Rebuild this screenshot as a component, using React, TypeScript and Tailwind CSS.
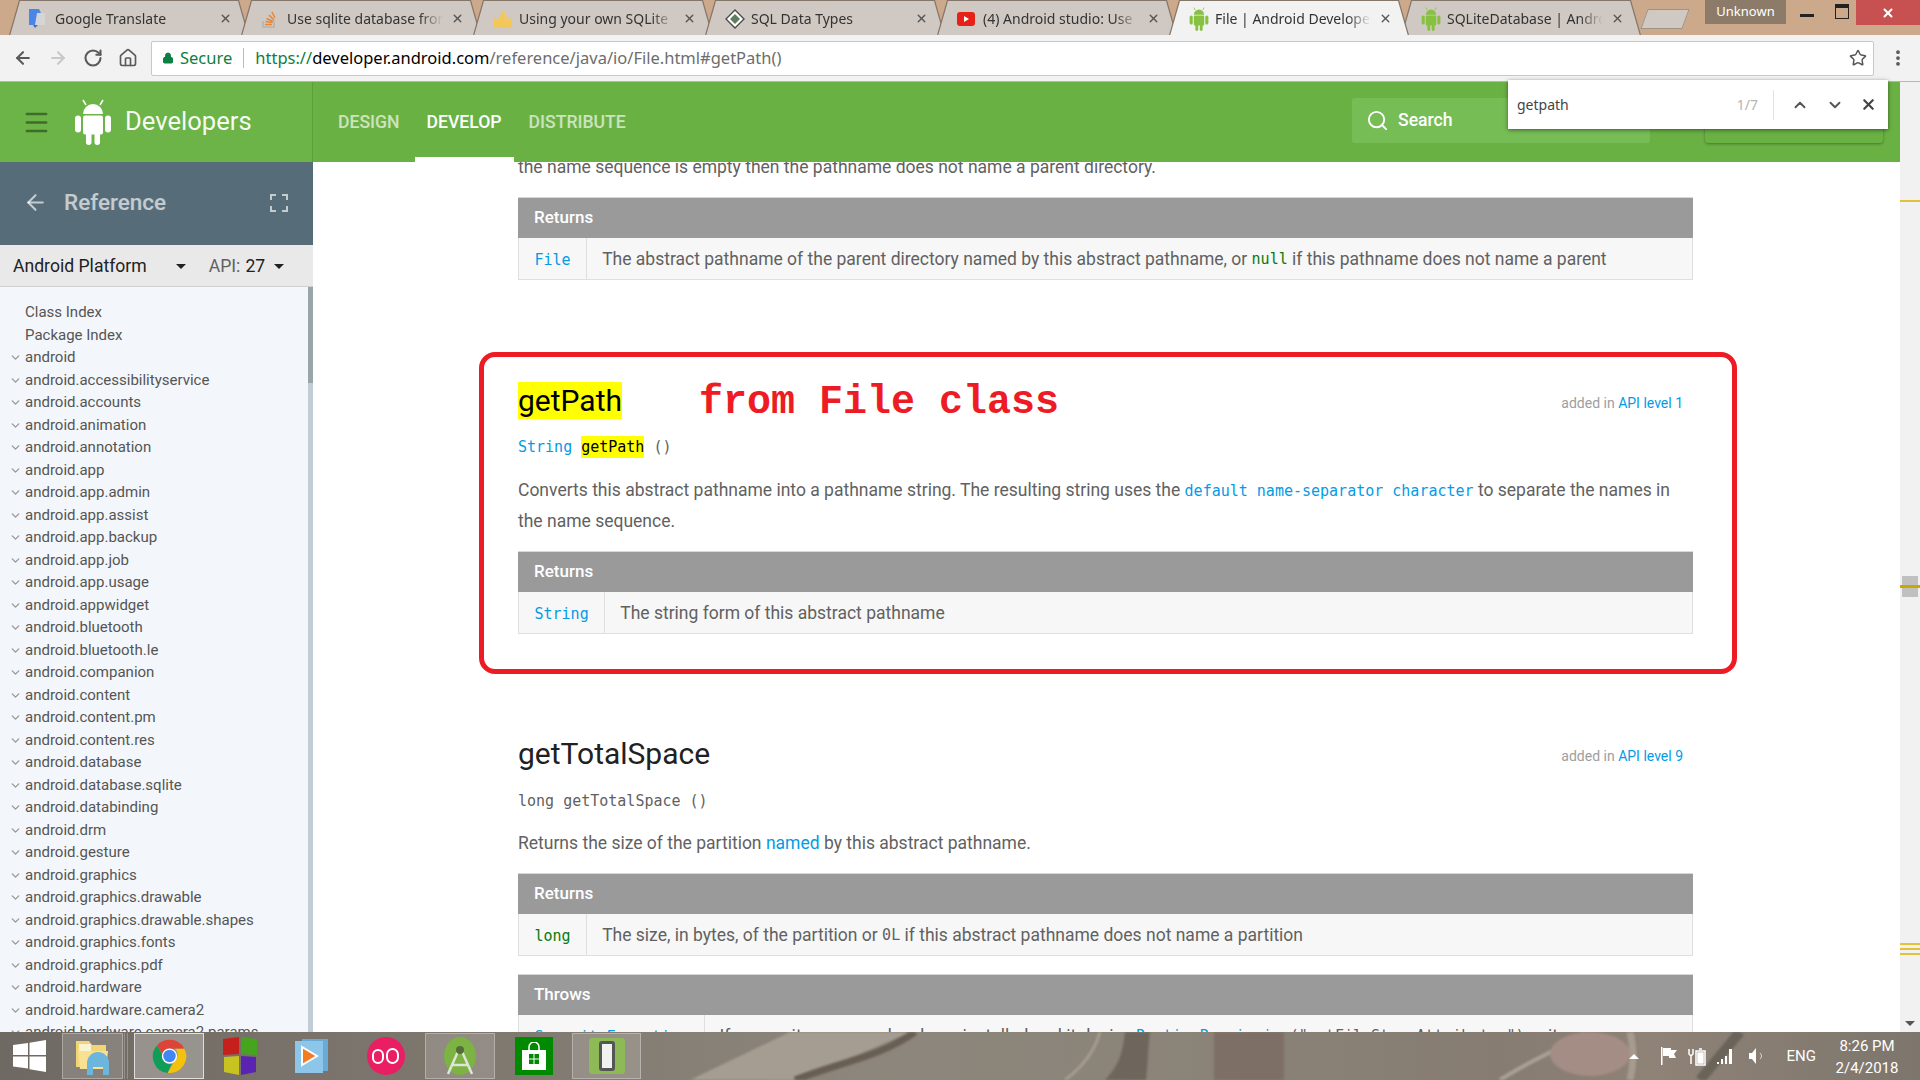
import React from "react";
import { ArrowLeft, ArrowRight, ChevronDown, ChevronUp, Home, Lock, Menu, MoreVertical, RotateCw, Search, Star, X } from "lucide-react";

const packages = [
  "android",
  "android.accessibilityservice",
  "android.accounts",
  "android.animation",
  "android.annotation",
  "android.app",
  "android.app.admin",
  "android.app.assist",
  "android.app.backup",
  "android.app.job",
  "android.app.usage",
  "android.appwidget",
  "android.bluetooth",
  "android.bluetooth.le",
  "android.companion",
  "android.content",
  "android.content.pm",
  "android.content.res",
  "android.database",
  "android.database.sqlite",
  "android.databinding",
  "android.drm",
  "android.gesture",
  "android.graphics",
  "android.graphics.drawable",
  "android.graphics.drawable.shapes",
  "android.graphics.fonts",
  "android.graphics.pdf",
  "android.hardware",
  "android.hardware.camera2",
  "android.hardware.camera2.params",
];

const AndroidBot = ({ className, color }: { className: string; color: string }) => (
  <svg viewBox="0 0 38 46" className={className} fill={color}>
    <path d="M9 15a10 10 0 0 1 20 0z" />
    <path d="M12 6 9 1M26 6l3-5" stroke={color} strokeWidth="1.5" />
    <rect x="9" y="16.5" width="20" height="19" rx="2" />
    <rect x="1" y="16.5" width="6" height="17" rx="3" />
    <rect x="31" y="16.5" width="6" height="17" rx="3" />
    <rect x="12" y="33" width="5.5" height="13" rx="2.7" />
    <rect x="20.5" y="33" width="5.5" height="13" rx="2.7" />
  </svg>
);

const tabs = [
  {
    title: "Google Translate",
    icon: (
      <svg viewBox="0 0 16 20" className="w-[16px] h-[20px]">
        <path d="M0 0h10l2 4v12H0z" fill="#4a86e8" />
        <path d="M8 4h8v12H6z" fill="#d5d5d5" />
        <path d="M4 16h5l-3 3z" fill="#3b6fc4" />
      </svg>
    ),
  },
  {
    title: "Use sqlite database from",
    icon: (
      <svg viewBox="0 0 16 20" className="w-[16px] h-[20px]" fill="none">
        <path d="M2 12v6h11v-6" stroke="#b9b3ac" strokeWidth="1.6" />
        <path d="M4 15.5h7M4.5 12.5l7 1M5.5 9.5l6.5 3M8 6l5 5M11 3l3 6" stroke="#e8873a" strokeWidth="1.6" />
      </svg>
    ),
  },
  {
    title: "Using your own SQLite",
    icon: (
      <svg viewBox="0 0 20 20" className="w-[20px] h-[20px]">
        <path d="M1 8l4 3 5-10 5 10 4-3v11H1z" fill="#f4c75a" />
      </svg>
    ),
  },
  {
    title: "SQL Data Types",
    icon: (
      <svg viewBox="0 0 20 20" className="w-[20px] h-[20px]">
        <path d="M10 1l9 9-9 9-9-9z" fill="#fff" stroke="#4b4b4b" strokeWidth="1.4" />
        <path d="M10 5l5 5-5 5-5-5z" fill="#5d7f5f" />
      </svg>
    ),
  },
  {
    title: "(4) Android studio: Use",
    icon: (
      <svg viewBox="0 0 18 14" className="w-[18px] h-[14px]">
        <rect width="18" height="14" rx="3" fill="#e62117" />
        <path d="M7 4l5 3-5 3z" fill="#fff" />
      </svg>
    ),
  },
  { title: "File | Android Develope", icon: <AndroidBot className="w-[20px] h-[24px]" color="#86c240" />, active: true },
  { title: "SQLiteDatabase | Andro", icon: <AndroidBot className="w-[20px] h-[24px]" color="#86c240" /> },
];

const Tab = ({ title, icon, active }: { title: string; icon: React.ReactNode; active?: boolean }) => (
  <div className={`w-[240px] h-[35px] -mr-[8px] shrink-0 bg-[#85766a] [clip-path:polygon(0_100%,10px_0,calc(100%-10px)_0,100%_100%)] ${active ? "relative z-10" : ""}`}>
    <div className={`h-[35px] mt-px flex items-center pl-[20px] pr-[17px] [clip-path:polygon(1px_100%,11px_0,calc(100%-11px)_0,calc(100%-1px)_100%)] ${active ? "bg-[#f2f2f2]" : "bg-[#d0c8c2]"}`}>
      <div className="w-[26px] shrink-0 flex items-center justify-start">{icon}</div>
      <div className="flex-1 min-w-0 overflow-hidden whitespace-nowrap text-[14px] text-[#333] [mask-image:linear-gradient(to_right,black_85%,transparent)]">{title}</div>
      <X className="w-[13px] h-[13px] ml-[8px] shrink-0 text-[#555]" strokeWidth={2.5} />
    </div>
  </div>
);

const Code = ({ children, className = "" }: { children: React.ReactNode; className?: string }) => (
  <code className={`font-['DejaVu_Sans_Mono',monospace] text-[15px] ${className}`}>{children}</code>
);

const DocTable = ({ title, type, children, typeColor = "text-[#039be5]" }: { title: string; type: string; children: React.ReactNode; typeColor?: string }) => (
  <div>
    <div className="h-[41px] flex items-center px-[16px] bg-[#9a9a9a] text-white font-medium text-[17px] border-t border-[#d8d8d8]">{title}</div>
    <div className="h-[42px] flex bg-[#f7f7f7] border-x border-b border-[#dfdfdf] overflow-hidden">
      <div className="px-[15.5px] pt-[3px] flex items-center border-r border-[#dfdfdf]">
        <Code className={typeColor}>{type}</Code>
      </div>
      <div className="px-[15px] pt-[1px] flex items-center whitespace-nowrap">{children}</div>
    </div>
  </div>
);

const Added = ({ level }: { level: number }) => (
  <div className="text-[14px] mt-[7px] text-[#9e9e9e] mr-[10px]">
    added in <span className="text-[#039be5]">API level {level}</span>
  </div>
);

const Taskbar = () => (
  <div className="h-[48px] shrink-0 relative flex items-center overflow-hidden bg-[linear-gradient(90deg,#6f6963_0%,#7f786f_25%,#8d867c_45%,#8b8479_60%,#867c72_78%,#8f8277_86%,#7d766c_100%)]">
    <svg className="absolute inset-0 w-full h-full blur-[1px]" viewBox="0 0 1920 48" preserveAspectRatio="none" fill="none">
      <path d="M690 48 790 0h120l-110 48z" fill="#a59d92" />
      <path d="M795 48C840 30 880 25 915 0" stroke="#695e54" strokeWidth="7" />
      <path d="M1065 48c20-15 30-30 35-48" stroke="#a59d92" strokeWidth="3" />
      <path d="M1105 48c15-15 18-30 20-48h25c-2 15-2 30-4 48z" fill="#6e665c" />
      <path d="M1214 48V0h70v48z" fill="#7d6f66" />
      <path d="M1500 48c30-20 60-30 85-48" stroke="#aaa296" strokeWidth="4" />
      <ellipse cx="1590" cy="22" rx="40" ry="22" fill="#a48d84" />
      <path d="M1630 48c4-20 4-30 0-48" stroke="#a59b8e" strokeWidth="7" />
      <path d="M1700 48l40-48" stroke="#6a6359" strokeWidth="10" />
    </svg>
    <div className="relative flex items-center h-full">
      <div className="w-[62px] flex justify-center pr-[3px]">
        <svg viewBox="0 0 33 32" className="w-[33px] h-[32px]" fill="#fff">
          <path d="M0 5l15-2v12H0zM16.500 2.800 33 0v15H16.500zM0 16.500h15v12L0 26.500zM16.500 16.500H33V32l-16.500-2.800z" />
        </svg>
      </div>
      <div className="w-[61px] h-[46px] flex items-center justify-center bg-white/15 border border-white/30">
        <svg viewBox="0 0 38 38" className="w-[38px] h-[38px]">
          <path d="M2 4h13l3 4h14v22H2z" fill="#f2d675" />
          <path d="M5 7h12v7H5z" fill="#fbf3cf" />
          <path d="M4 14h30l-2 18H6z" fill="#f8e193" />
          <path d="M13 26a9 9 0 0 1 22 0v12h-6v-8h-10v8h-6z" fill="#6cb5dd" />
        </svg>
      </div>
      <div className="w-[4px] h-[46px] ml-[1px] border-x border-white/25" />
      <div className="w-[70px] h-[46px] ml-[6px] flex items-center justify-center bg-white/25 border border-white/70">
        <svg viewBox="0 0 40 40" className="w-[37px] h-[37px]">
          <path d="M20 2a18 18 0 0 1 16 9.500H20a8.500 8.500 0 0 0-8 5.500L6.500 8A18 18 0 0 1 20 2z" fill="#db4437" />
          <path d="M6.500 8 14 21a8 8 0 0 0 9 5l-5 11.800A18 18 0 0 1 6.500 8z" fill="#0f9d58" />
          <path d="M36 11.500A18 18 0 0 1 18 37.800L26 24a8 8 0 0 0 0-12.500z" fill="#f4c20d" />
          <circle cx="20" cy="19.500" r="7.500" fill="#4285f4" stroke="#fff" strokeWidth="1.500" />
        </svg>
      </div>
      <div className="w-[72px] flex justify-center">
        <svg viewBox="0 0 38 40" className="w-[38px] h-[40px]">
          <path d="M2 3l16-2v17l-16 1z" fill="#c6201c" />
          <path d="M20 1l16 2v16l-16-1z" fill="#46a51f" />
          <path d="M3 21l15-1v19l-15-3z" fill="#c9c322" />
          <path d="M20 20l15 1v15l-15 3z" fill="#5b24b0" />
        </svg>
      </div>
      <div className="w-[70px] flex justify-center">
        <svg viewBox="0 0 34 36" className="w-[34px] h-[36px]">
          <path d="M8 1h26v32H8z" fill="#68abd6" />
          <path d="M1 3h28v32H1z" fill="#8dc6e8" />
          <path d="M8 9l15 9-15 9z" fill="#f47b20" stroke="#fff" strokeWidth="2" />
        </svg>
      </div>
      <div className="w-[79px] flex justify-center">
        <div className="w-[38px] h-[38px] rounded-full bg-[#e91e63] flex items-center justify-center gap-[2px]">
          <div className="w-[12px] h-[15px] rounded-full border-[2px] border-white" />
          <div className="w-[13px] h-[16px] rounded-full border-[2px] border-white" />
        </div>
      </div>
      <div className="w-[70px] h-[46px] flex items-center justify-center bg-white/15 border border-white/30">
        <svg viewBox="0 0 40 40" className="w-[40px] h-[40px]">
          <ellipse cx="20" cy="20" rx="16" ry="19" fill="#7cb342" />
          <path d="M20 11 8 38M20 11l12 27M11 29h18" stroke="#dfe3d8" strokeWidth="2.500" fill="none" />
          <circle cx="20" cy="14" r="4" fill="#546e3a" />
        </svg>
      </div>
      <div className="w-[77px] flex justify-center">
        <div className="w-[38px] h-[38px] bg-[#008a00] flex items-center justify-center">
          <svg viewBox="0 0 24 28" className="w-[24px] h-[28px]" fill="#fff">
            <path d="M0 8h24v20H0z" />
            <path d="M7 9V5a5 5 0 0 1 10 0v4" fill="none" stroke="#fff" strokeWidth="1.500" />
            <path d="M7 12h4.500v4.500H7zM12.500 12H17v4.500h-4.500zM7 17.500h4.500V22H7zM12.500 17.500H17V22h-4.500z" fill="#008a00" />
          </svg>
        </div>
      </div>
      <div className="w-[69px] h-[46px] flex items-center justify-center bg-white/15 border border-white/30">
        <div className="w-[36px] h-[36px] bg-[#8bc34a]/80 rounded-[3px] flex items-center justify-center">
          <div className="w-[16px] h-[30px] rounded-[3px] bg-[#f0f0f0] border-[3px] border-[#555]" />
        </div>
      </div>
    </div>
    <div className="relative ml-auto h-full flex items-center text-white">
      <div className="w-0 h-0 border-x-[5px] border-x-transparent border-b-[5px] border-b-white mr-[20px]" />
      <svg viewBox="0 0 20 20" className="w-[20px] h-[20px] mr-[9px]" fill="#fff"><path d="M2 1h1.500v18H2zM4 2h8v2h6l-3 4 2 4h-7v-2H4z" /></svg>
      <svg viewBox="0 0 20 20" className="w-[20px] h-[20px] mr-[9px]" fill="none" stroke="#fff" strokeWidth="1.500"><path d="M1 3v5l2 2 2-2V3M3 10v8M8 5h9v14H8z" /><path d="M11 3h3M10 7h5v10h-5z" fill="#fff" /></svg>
      <svg viewBox="0 0 16 16" className="w-[16px] h-[16px] mr-[15px]" fill="#fff"><path d="M0 14h2v2H0zM4 11h2v5H4zM8 8h2v8H8zM12 1h3v15h-3z" /></svg>
      <svg viewBox="0 0 18 18" className="w-[18px] h-[18px] mr-[21px]" fill="#fff"><path d="M1 6h3l4-5v16l-4-5H1z" /><path d="M12 6c2 2 2 4 0 6" fill="none" stroke="#d8d8d8" /></svg>
      <span className="text-[15px] mr-[19px]">ENG</span>
      <div className="w-[64px] mr-[21px] pt-[2px] text-[15px] leading-[22px] text-center whitespace-nowrap">
        <div>8:26 PM</div>
        <div>2/4/2018</div>
      </div>
    </div>
  </div>
);

export default function App() {
  return (
    <div className="w-[1920px] h-[1080px] overflow-hidden flex flex-col bg-white font-['Roboto',sans-serif]">
      {/* chrome tab strip */}
      <div className="h-[35px] shrink-0 bg-[#cba98a] relative flex pl-[9px] font-['Noto_Sans',sans-serif]">
        {tabs.map((t) => (
          <Tab key={t.title} title={t.title} icon={t.icon} active={t.active} />
        ))}
        <div className="w-[42px] h-[20px] ml-[11px] mt-[9px] bg-[#d0c8c2] border border-[#9e9389] -skew-x-[20deg]" />
        <div className="ml-auto flex items-start h-[25px]">
          <div className="w-[81px] h-[24px] bg-[#8c7b68] flex items-center justify-center text-white text-[13px]">Unknown</div>
          <div className="w-[42px] h-[24px] flex items-center justify-center">
            <div className="w-[14px] h-[3px] mt-[6px] bg-[#222]" />
          </div>
          <div className="w-[28px] h-[24px] flex justify-center pt-[4px]">
            <div className="w-[14px] h-[15px] border-[1.5px] border-t-[4px] border-[#222]" />
          </div>
          <div className="w-[64px] h-[25px] bg-[#c75050] flex items-center justify-center">
            <X className="w-[14px] h-[14px] text-white" strokeWidth={3.5} />
          </div>
        </div>
      </div>

      {/* toolbar */}
      <div className="h-[47px] shrink-0 bg-[#f2f2f2] border-b border-[#b5b5b5] flex items-center font-['Noto_Sans',sans-serif]">
        <div className="w-[151px] flex items-center pl-[13px] gap-[15px]">
          <ArrowLeft className="w-[20px] h-[20px] text-[#5a5a5a]" strokeWidth={2.5} />
          <ArrowRight className="w-[20px] h-[20px] text-[#c8c8c8]" strokeWidth={2.5} />
          <RotateCw className="w-[20px] h-[20px] text-[#5a5a5a]" strokeWidth={2.5} />
          <Home className="w-[20px] h-[20px] text-[#5a5a5a]" strokeWidth={2} />
        </div>
        <div className="w-[1723px] h-[35px] bg-white border border-[#c8c8c8] rounded-[2px] flex items-center pl-[10px] pr-[6px]">
          <Lock className="w-[12px] h-[16px] text-[#0b8043] fill-[#0b8043]" />
          <span className="ml-[6px] text-[16.5px] text-[#0b8043]">Secure</span>
          <div className="w-px h-[20px] bg-[#bbb] mx-[11px]" />
          <div className="text-[16.5px] whitespace-nowrap text-[#6d6d6d]">
            <span className="text-[#0b8043]">https://</span>
            <span className="text-black">developer.android.com</span>/reference/java/io/File.html#getPath()
          </div>
          <Star className="ml-auto w-[18px] h-[18px] text-[#555]" strokeWidth={2} />
        </div>
        <MoreVertical className="ml-[14px] w-[20px] h-[20px] text-[#555]" strokeWidth={2.5} />
      </div>

      {/* site header */}
      <div className="h-[80px] shrink-0 flex relative">
        <div className="w-[313px] shrink-0 bg-[#6cb447] border-r border-[#5da03a] flex items-center pl-[22px]">
          <Menu className="w-[29px] h-[29px] text-[#3f6b2b]" />
          <AndroidBot className="w-[38px] h-[46px] ml-[23px]" color="#fff" />
          <span className="ml-[13px] pb-[2px] text-[25.6px] text-white/95">Developers</span>
        </div>
        <div className="flex-1 bg-[#6ab144] flex mr-[20px] pr-[17px]">
          <div className="flex h-full pl-[25px] text-[17.6px] font-medium">
            <div className="flex items-center text-white/65">DESIGN</div>
            <div className="ml-[15px] px-[12px] flex items-center text-white relative">
              DEVELOP
              <div className="absolute left-0 right-0 bottom-0 h-[5px] bg-white" />
            </div>
            <div className="ml-[15px] flex items-center text-white/65">DISTRIBUTE</div>
          </div>
          <div className="ml-auto mt-[16px] w-[298px] h-[45px] bg-[#76bd55] rounded-[3px] flex items-center pl-[14px] text-white">
            <Search className="w-[23px] h-[23px]" />
            <span className="ml-[9px] text-[17.6px] font-medium">Search</span>
          </div>
          <div className="ml-[55px] mt-[16px] w-[178px] h-[45px] bg-[#6ab144] rounded-[3px] shadow-[0_1px_3px_rgba(0,0,0,0.35)]" />
        </div>
        <div className="w-[20px] bg-[#f1f1f1] absolute right-0 top-0 bottom-0" />
        {/* find in page */}
        <div className="absolute left-[1508px] top-[-2px] w-[380px] h-[49px] bg-white shadow-[0_1px_4px_rgba(0,0,0,0.5)] flex items-center pl-[9px] font-['Noto_Sans',sans-serif] z-20">
          <span className="text-[14px] text-[#444]">getpath</span>
          <span className="ml-auto text-[14px] text-[#b5b5b5]">1/7</span>
          <div className="w-px h-[30px] bg-[#e2e2e2] ml-[15px]" />
          <ChevronUp className="w-[18px] h-[18px] ml-[17px] text-[#555]" strokeWidth={2.5} />
          <ChevronDown className="w-[18px] h-[18px] ml-[17px] text-[#555]" strokeWidth={2.5} />
          <X className="w-[17px] h-[17px] ml-[16px] mr-[11px] text-[#444]" strokeWidth={3} />
        </div>
      </div>

      <div className="flex-1 min-h-0 flex">
        {/* left nav */}
        <div className="w-[313px] shrink-0 flex flex-col overflow-hidden">
          <div className="h-[83px] shrink-0 bg-[#566d79] flex items-center pl-[23px] pb-[2px] text-white/65">
            <ArrowLeft className="w-[25px] h-[25px]" />
            <span className="ml-[16px] text-[22.5px] font-medium">Reference</span>
            <svg viewBox="0 0 18 18" className="w-[18px] h-[18px] ml-[104px]" fill="none" stroke="currentColor" strokeWidth="2">
              <path d="M1 6V1h5M12 1h5v5M17 12v5h-5M6 17H1v-5" />
            </svg>
          </div>
          <div className="h-[42px] shrink-0 bg-[#e9e9ea] border-b border-[#cfcfcf] flex items-center pl-[13px] pt-[2px] text-[17.6px] text-[#212121]">
            <span>Android Platform</span>
            <div className="ml-[29px] w-0 h-0 border-x-[5px] border-x-transparent border-t-[5px] border-t-[#212121]" />
            <span className="ml-[23px] text-[#616161]">API:</span>
            <span className="ml-[5px]">27</span>
            <div className="ml-[9px] w-0 h-0 border-x-[5px] border-x-transparent border-t-[5px] border-t-[#212121]" />
          </div>
          <div className="flex-1 min-h-0 flex bg-[#f3f7fb]">
            <div className="flex-1 pt-[14px] pl-[25px] text-[15px] leading-[22.5px] text-[#555] whitespace-nowrap overflow-hidden">
              <div>Class Index</div>
              <div>Package Index</div>
              {packages.map((p) => (
                <div key={p} className="relative">
                  <ChevronDown className="absolute -left-[16px] top-[5px] w-[13px] h-[13px] text-[#999]" strokeWidth={2.5} />
                  {p}
                </div>
              ))}
            </div>
            <div className="w-[5px] bg-[#c1cdd5]">
              <div className="h-[96px] bg-[#9aa5aa]" />
            </div>
          </div>
        </div>

        {/* doc content */}
        <div className="flex-1 min-w-0 relative overflow-hidden pl-[205px] pr-[227px] text-[#616161] text-[17.5px]">
          <div className="-mt-[10px] h-[45px] leading-[30px] whitespace-nowrap">the name sequence is empty then the pathname does not name a parent directory.</div>
          <DocTable title="Returns" type="File">
            The abstract pathname of the parent directory named by this abstract pathname, or&nbsp;<Code className="text-[#0a7a0a]">null</Code>&nbsp;if this pathname does not name a parent
          </DocTable>

          {/* getPath */}
          <div className="mt-[101px] flex items-center justify-between h-[38px]">
            <h2 className="text-[30px] text-black bg-[#ffff00] leading-[37px]">getPath</h2>
            <Added level={1} />
          </div>
          <div className="mt-[18px] h-[20px] flex items-center">
            <Code className="text-[#039be5]">String</Code>
            <Code className="ml-[9px] text-black bg-[#ffff00]">getPath</Code>
            <Code className="ml-[9px]">()</Code>
          </div>
          <p className="mt-[18px] leading-[30px]">
            Converts this abstract pathname into a pathname string. The resulting string uses the <Code className="text-[#039be5] text-[14.6px]">default name-separator character</Code> to separate the names in the name sequence.
          </p>
          <div className="mt-[15px]">
            <DocTable title="Returns" type="String">The string form of this abstract pathname</DocTable>
          </div>

          {/* getTotalSpace */}
          <div className="mt-[100px] flex items-center justify-between h-[38px]">
            <h2 className="text-[30px] text-[#212121] leading-[37px]">getTotalSpace</h2>
            <Added level={9} />
          </div>
          <div className="mt-[19px] h-[20px] flex items-center">
            <Code>long getTotalSpace ()</Code>
          </div>
          <p className="mt-[17px] leading-[30px]">
            Returns the size of the partition <span className="text-[#039be5]">named</span> by this abstract pathname.
          </p>
          <div className="mt-[15px]">
            <DocTable title="Returns" type="long" typeColor="text-[#0a7a0a]">
              The size, in bytes, of the partition or&nbsp;<Code>0L</Code>&nbsp;if this abstract pathname does not name a partition
            </DocTable>
          </div>
          <div className="mt-[18px]">
            <DocTable title="Throws" type="SecurityException">
              If a security manager has been installed and it denies&nbsp;<Code className="text-[#039be5]">RuntimePermission</Code><Code>("getFileStoreAttributes")</Code>&nbsp;write
            </DocTable>
          </div>

          {/* hand drawn annotation */}
          <div className="absolute left-[166px] top-[190px] w-[1258px] h-[322px] border-[5px] border-[#ed1c24] rounded-[16px] pointer-events-none" />
          <div className="absolute left-[386px] top-[218px] font-['Liberation_Mono',monospace] font-bold text-[40px] leading-[46px] text-[#ed1c24]">from File class</div>

          {/* page scrollbar */}
          <div className="absolute right-0 top-0 bottom-0 w-[20px] bg-[#f1f1f1]">
            <div className="absolute left-0 right-0 top-[38px] h-[2px] bg-[#e3c23a]" />
            <div className="absolute left-[2px] right-[2px] top-[414px] h-[21px] bg-[#c0c0c0]" />
            <div className="absolute left-0 right-0 top-[423px] h-[3px] bg-[#c9a900]" />
            <div className="absolute left-0 right-0 top-[781px] h-[2px] bg-[#e3c23a]" />
            <div className="absolute left-0 right-0 top-[786px] h-[2px] bg-[#e3c23a]" />
            <div className="absolute left-0 right-0 top-[791px] h-[2px] bg-[#e3c23a]" />
            <div className="absolute left-[5px] bottom-[6px] w-0 h-0 border-x-[5px] border-x-transparent border-t-[5px] border-t-[#555]" />
          </div>
        </div>
      </div>

      <Taskbar />
    </div>
  );
}
